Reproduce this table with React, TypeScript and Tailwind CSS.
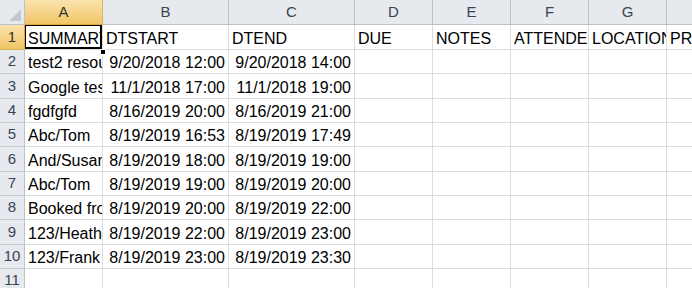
import React from 'react';

const cols = ['A', 'B', 'C', 'D', 'E', 'F', 'G', 'H'];

// right-aligned columns hold dates
const rows: string[][] = [
  ['SUMMARY', 'DTSTART', 'DTEND', 'DUE', 'NOTES', 'ATTENDEE', 'LOCATION', 'PRIORITY'],
  ['test2 resource', '9/20/2018 12:00', '9/20/2018 14:00', '', '', '', '', ''],
  ['Google test', '11/1/2018 17:00', '11/1/2018 19:00', '', '', '', '', ''],
  ['fgdfgfd', '8/16/2019 20:00', '8/16/2019 21:00', '', '', '', '', ''],
  ['Abc/Tom', '8/19/2019 16:53', '8/19/2019 17:49', '', '', '', '', ''],
  ['And/Susan', '8/19/2019 18:00', '8/19/2019 19:00', '', '', '', '', ''],
  ['Abc/Tom', '8/19/2019 19:00', '8/19/2019 20:00', '', '', '', '', ''],
  ['Booked from', '8/19/2019 20:00', '8/19/2019 22:00', '', '', '', '', ''],
  ['123/Heather', '8/19/2019 22:00', '8/19/2019 23:00', '', '', '', '', ''],
  ['123/Frank', '8/19/2019 23:00', '8/19/2019 23:30', '', '', '', '', ''],
  ['', '', '', '', '', '', '', ''],
];

const rowHeights = ['h-[25px]', 'h-[24px]', 'h-[25px]', 'h-[24px]', 'h-[24px]', 'h-[25px]', 'h-[24px]', 'h-[24px]', 'h-[25px]', 'h-[24px]', 'h-[24px]'];

export default function App() {
  return (
    <div
      className="w-[692px] h-[288px] overflow-hidden bg-white text-[16px] text-black"
      style={{ fontFamily: '"Liberation Sans", Arial, sans-serif' }}
    >
      <div className="grid grid-cols-[25px_78px_126px_126px_78px_78px_78px_78px_100px]">
        {/* corner */}
        <div className="relative h-[25px] bg-[#e6e9ee] border-r border-b border-[#bcc2ca]">
          <div
            className="absolute right-[3px] bottom-[3px] w-[12px] h-[12px] bg-[#c4c9cf]"
            style={{ clipPath: 'polygon(100% 0, 100% 100%, 0 100%)' }}
          />
        </div>
        {cols.map((c, i) => (
          <div
            key={c}
            className={`h-[25px] flex items-center justify-center border-r border-b text-[15px] ${
              i === 0
                ? 'bg-gradient-to-b from-[#fbe3ad] to-[#f1c563] border-r-[#d9b25a] border-b-[#e9a23c] text-[#333]'
                : 'bg-[#e6e9ee] border-r-[#bcc2ca] border-b-[#bcc2ca] text-[#3a4452]'
            }`}
          >
            {c}
          </div>
        ))}

        {rows.map((r, ri) => (
          <React.Fragment key={ri}>
            <div
              className={`${rowHeights[ri]} flex items-center justify-center border-r border-b text-[15px] ${
                ri === 0
                  ? 'bg-gradient-to-b from-[#fbe3ad] to-[#f1c563] border-r-[#e9a23c] border-b-[#d9b25a] text-[#333]'
                  : 'bg-[#e6e9ee] border-r-[#bcc2ca] border-b-[#c8cdd3] text-[#3a4452]'
              }`}
            >
              {ri + 1}
            </div>
            {r.map((v, ci) => {
              const right = ri > 0 && (ci === 1 || ci === 2);
              return (
                <div
                  key={ci}
                  className={`${rowHeights[ri]} relative flex items-end pb-[2px] leading-[16px] overflow-hidden whitespace-nowrap border-r border-b border-[#dadcdd] ${
                    right ? 'justify-end pr-[3px]' : 'pl-[3px]'
                  }`}
                >
                  <span className={right ? '' : 'block overflow-hidden'}>{v}</span>
                  {ri === 0 && ci === 0 && (
                    <div className="absolute inset-0 -top-px -left-px border-2 border-black pointer-events-none" />
                  )}
                </div>
              );
            })}
          </React.Fragment>
        ))}
      </div>
      {/* fill handle over the selection corner */}
      <div className="relative">
        <div className="absolute left-[100px] top-[-244px] w-[6px] h-[6px] bg-black border border-white" />
      </div>
    </div>
  );
}
